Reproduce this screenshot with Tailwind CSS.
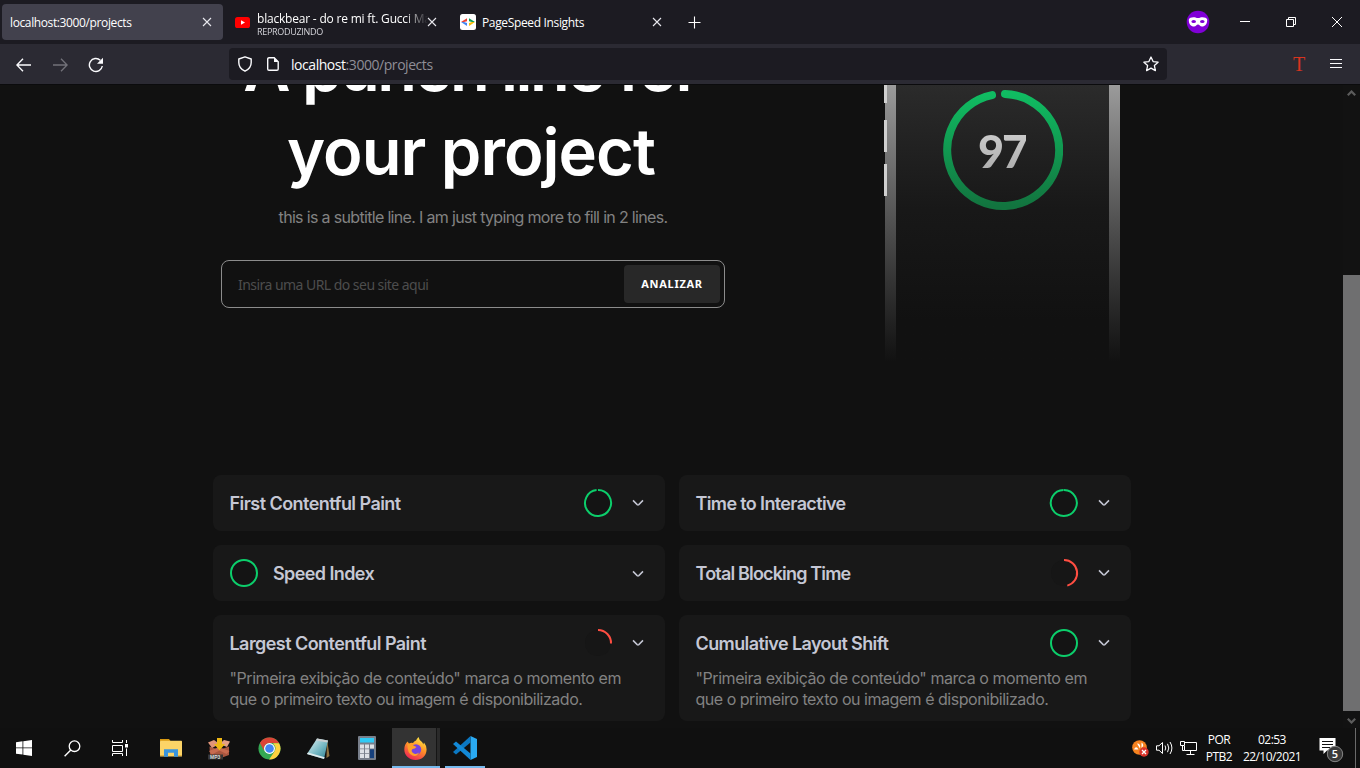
<!DOCTYPE html>
<html lang="pt-BR">
<head>
<meta charset="utf-8">
<title>localhost:3000/projects</title>
<script src="https://cdn.jsdelivr.net/npm/@tailwindcss/browser@4"></script>
</head>
<body class="w-[1360px] h-[768px] overflow-hidden bg-[#111111] flex flex-col font-['Open_Sans',sans-serif] text-white">
<svg class="hidden">
  <symbol id="close" viewBox="0 0 10 10"><path d="M1 1l8 8M9 1l-8 8" stroke="#e8e8ee" stroke-width="1.1" fill="none"/></symbol>
  <symbol id="chev" viewBox="0 0 12 8"><path d="M1 1.4l4.2 4.2q.8.6 1.6 0L11 1.4" stroke="#c5c7d4" stroke-width="1.5" fill="none"/></symbol>
</svg>

<!-- tab strip -->
<header class="h-[44px] shrink-0 bg-[#1c1b22] flex items-center pl-[2px]">
  <div class="w-[221px] h-[36px] bg-[#42414d] rounded-[4px] flex items-center justify-between pl-[8px] pr-[11px]">
    <span class="mt-[2px] text-[12px] leading-[16px] tracking-[-0.38px] whitespace-nowrap">localhost:3000/projects</span>
    <svg class="size-[10px]"><use href="#close"/></svg>
  </div>
  <div class="w-[225px] h-[36px] flex items-center pl-[12px] pr-[10px]">
    <svg class="w-[15px] h-[11px] shrink-0" viewBox="0 0 15 11"><rect width="15" height="11" rx="2.6" fill="#f00"/><path d="M6 3.2v4.6l4-2.3z" fill="#fff"/></svg>
    <div class="mt-[3px] ml-[7px] w-[171px] flex flex-col whitespace-nowrap overflow-hidden [mask-image:linear-gradient(to_right,#000_148px,transparent_171px)]">
      <span class="text-[12px] leading-[17px] tracking-[-0.2px]">blackbear - do re mi ft. Gucci Ma</span>
      <span class="text-[9px] leading-[12px] tracking-[-0.3px] -mt-px text-[#d4d4da]">REPRODUZINDO</span>
    </div>
    <svg class="size-[10px] shrink-0 -ml-[1px]"><use href="#close"/></svg>
  </div>
  <div class="w-[225px] h-[36px] flex items-center pl-[12px] pr-[11px]">
    <svg class="size-[16px] shrink-0" viewBox="0 0 16 16"><rect width="16" height="16" rx="2.5" fill="#fff"/><path d="M7 4.2v3L4 8 1 8z" fill="#ea4335"/><path d="M1 8h3l3 1v3z" fill="#4285f4"/><path d="M9 4.2v3L12 8h3z" fill="#0f9d58"/><path d="M15 8h-3L9 9v3z" fill="#fbbc04"/></svg>
    <span class="mt-[2px] ml-[6px] flex-1 text-[12px] leading-[16px] tracking-[-0.35px] whitespace-nowrap">PageSpeed Insights</span>
    <svg class="size-[10px]"><use href="#close"/></svg>
  </div>
  <svg class="ml-[15px] size-[13px]" viewBox="0 0 13 13"><path d="M6.5 .5v12M.5 6.5h12" stroke="#fff" stroke-width="1.1"/></svg>
  <svg class="ml-auto size-[24px]" viewBox="0 0 24 24"><circle cx="12" cy="12" r="11.3" fill="#8000d7"/><path d="M2.8 9.5C3.3 7 8 6.800 9.600 7.500Q12 8.600 14.400 7.500C16 6.800 20.700 7 21.200 9.500C21.400 14 19 16.600 16 16.600C14 16.600 13.500 14.500 12 14.500S10 16.600 8 16.600C5 16.600 2.600 14 2.800 9.500z" fill="#fff"/><ellipse cx="7.700" cy="11.600" rx="2.300" ry="1.500" fill="#8000d7"/><ellipse cx="16.300" cy="11.600" rx="2.300" ry="1.500" fill="#8000d7"/></svg>
  <svg class="ml-[30px] w-[10px] h-[10px]" viewBox="0 0 10 10"><path d="M0 4.500h10" stroke="#fff"/></svg>
  <svg class="ml-[36px] size-[10px]" viewBox="0 0 10 10"><path d="M.5 2.500h7v7h-7zM2.500 2.500v-2h7v7h-2" stroke="#fff" fill="none"/></svg>
  <svg class="ml-[36px] mr-[18px] size-[10px]" viewBox="0 0 10 10"><path d="M0 0l10 10M10 0L0 10" stroke="#fff" fill="none"/></svg>
</header>

<!-- toolbar -->
<nav class="h-[40px] shrink-0 bg-[#2b2a33] flex items-center pl-[16px] pr-[18px]">
  <svg class="mt-px w-[15px] h-[14px]" viewBox="0 0 15 14"><path d="M7 .8L.9 7 7 13.200M1 7h14" stroke="#fbfbfe" stroke-width="1.400" fill="none"/></svg>
  <svg class="mt-px ml-[22px] w-[15px] h-[14px]" viewBox="0 0 15 14"><path d="M8 .8L14.100 7 8 13.200M14 7H0" stroke="#73727a" stroke-width="1.300" fill="none"/></svg>
  <svg class="mt-px ml-[20px] size-[16px]" viewBox="0 0 16 16"><path d="M14.300 9A6.500 6.500 0 1 1 12.300 3.200" stroke="#fbfbfe" stroke-width="1.400" fill="none"/><path d="M15 .8v6H9z" fill="#fbfbfe"/></svg>
  <div class="ml-[125px] w-[938px] h-[32px] rounded-[4px] bg-[#1c1b22] flex items-center pl-[9px] pr-[8px]">
    <svg class="w-[14px] h-[16px]" viewBox="0 0 14 16"><path d="M7 .8L13.200 3v3.500c0 4-2.400 7-6.200 8.700C3.200 13.500.8 10.500.8 6.500V3z" stroke="#fbfbfe" stroke-width="1.400" fill="none" stroke-linejoin="round"/></svg>
    <svg class="ml-[15px] w-[12px] h-[14px]" viewBox="0 0 12 14"><path d="M2 .7h5.200l4 4V12a1.300 1.300 0 0 1-1.300 1.300H2A1.300 1.300 0 0 1 .7 12V2A1.300 1.300 0 0 1 2 .7z" stroke="#fbfbfe" stroke-width="1.400" fill="none"/><path d="M7 .5v4.500h4.500z" fill="#fbfbfe"/></svg>
    <span class="mt-px ml-[12px] flex-1 text-[14px] leading-[20px] tracking-[-0.45px] text-[#fbfbfe] whitespace-nowrap">localhost<span class="text-[#8f8e96]">:3000/projects</span></span>
    <svg class="size-[16px]" viewBox="0 0 16 16"><path d="M8 1l2.100 4.600 5 .6-3.700 3.400 1 5L8 12.100 3.600 14.600l1-5L.9 6.200l5-.6z" stroke="#fbfbfe" stroke-width="1.300" fill="none" stroke-linejoin="round"/></svg>
  </div>
  <span class="ml-auto mr-px w-[14px] text-center font-['Liberation_Serif',serif] text-[20px] leading-[20px] text-[#d8341f]">T</span>
  <svg class="ml-[23px] -mt-px w-[12px] h-[11px]" viewBox="0 0 12 11"><path d="M0 1.500h12M0 5.500h12M0 9.500h12" stroke="#fbfbfe" stroke-width="1.200"/></svg>
</nav>

<!-- page -->
<div class="h-[644px] shrink-0 flex border-t border-[#0b0b0d] overflow-hidden">
  <main class="w-[1343px] h-[643px] overflow-hidden font-['Inter',sans-serif] bg-[#111111]">
    <section class="flex h-[390px] pl-[221px]">
      <div class="w-[504px] -mt-[59px] flex flex-col items-center">
        <h1 class="-ml-[4px] text-[65px] leading-[84px] font-semibold text-center whitespace-nowrap"><span class="tracking-[-2.5px]">A punch line for</span><br><span class="tracking-[-0.95px]">your project</span></h1>
        <p class="mt-[11px] text-[16px] leading-[24px] tracking-[-0.67px] text-[#828282] whitespace-nowrap">this is a subtitle line. I am just typing more to fill in 2 lines.</p>
        <div class="mt-[31px] w-[504px] h-[48px] shrink-0 rounded-[8px] border border-[#8c8c8c] flex items-center justify-between pl-[16px] pr-[4px]">
          <span class="font-['Noto_Sans',sans-serif] text-[14px] tracking-[-0.54px] text-[#4d4d4d]">Insira uma URL do seu site aqui</span>
          <button class="w-[96px] h-[38px] rounded-[4px] bg-[#282828] font-['Noto_Sans',sans-serif] font-bold text-[11px] tracking-[0.7px]">ANALIZAR</button>
        </div>
      </div>
      <div class="relative ml-[160px] w-[235px] h-[277px] flex">
        <div class="w-[11px] bg-linear-to-b from-[#9b9b9b] to-[#111111]"></div>
        <div class="flex-1 flex justify-center bg-linear-to-b from-[#2b2b2b] via-[#181818] via-45% to-[#111111] to-85%">
          <div class="relative mt-[5px] size-[120px] flex items-center justify-center">
            <svg class="absolute inset-0 size-[120px]" viewBox="0 0 120 120"><defs><linearGradient id="g" x1="0" y1="0" x2="0" y2="1"><stop stop-color="#10bc62"/><stop offset="1" stop-color="#12743f"/></linearGradient></defs><path d="M62 4A56 56 0 1 1 49 5.100" stroke="url(#g)" stroke-width="8" stroke-linecap="round" fill="none"/></svg>
            <span class="mt-px -ml-px font-['Lato',sans-serif] font-black text-[45px] leading-[56px] tracking-[-2px] bg-linear-to-b from-[#d2d2d2] to-[#a8a8a8] bg-clip-text text-transparent">97</span>
          </div>
        </div>
        <div class="w-[11px] bg-linear-to-b from-[#9b9b9b] to-[#111111]"></div>
        <div class="absolute -left-px top-0 w-[3px] h-[18px] bg-[#d0d0d0]"></div>
        <div class="absolute -left-px top-[35px] w-[3px] h-[32px] bg-[#d0d0d0]"></div>
        <div class="absolute -left-px top-[79px] w-[3px] h-[32px] bg-[#d0d0d0]"></div>
      </div>
    </section>

    <section class="grid grid-cols-2 gap-[14px] w-[918px] ml-[213px] text-[18px] font-semibold text-[#c5c7d4]">
      <article class="h-[56px] pl-[16.5px] pr-[17px] rounded-[8px] bg-[#181818] flex items-center">
        <h2 class="flex-1 tracking-[-0.55px]">First Contentful Paint</h2>
        <svg class="size-[30px]" viewBox="0 0 30 30"><path d="M15 2A13 13 0 1 1 13.600 2.080" stroke="#0cce6b" stroke-width="2" fill="#141414"/></svg>
        <svg class="ml-[19px] mr-[4px] w-[12px] h-[8px]"><use href="#chev"/></svg>
      </article>
      <article class="h-[56px] pl-[16.5px] pr-[17px] rounded-[8px] bg-[#181818] flex items-center">
        <h2 class="flex-1 tracking-[-0.64px]">Time to Interactive</h2>
        <svg class="size-[30px]" viewBox="0 0 30 30"><path d="M15 2A13 13 0 1 1 14.600 2" stroke="#0cce6b" stroke-width="2" fill="#141414"/></svg>
        <svg class="ml-[19px] mr-[4px] w-[12px] h-[8px]"><use href="#chev"/></svg>
      </article>
      <article class="h-[56px] px-[17px] rounded-[8px] bg-[#181818] flex items-center">
        <svg class="-ml-px size-[30px]" viewBox="0 0 30 30"><circle cx="15" cy="15" r="13" stroke="#0cce6b" stroke-width="2" fill="#141414"/></svg>
        <h2 class="ml-[14px] flex-1 tracking-[-0.6px]">Speed Index</h2>
        <svg class="mr-[4px] mt-[2px] w-[12px] h-[8px]"><use href="#chev"/></svg>
      </article>
      <article class="h-[56px] pl-[16.5px] pr-[17px] rounded-[8px] bg-[#181818] flex items-center">
        <h2 class="flex-1 tracking-[-0.83px]">Total Blocking Time</h2>
        <svg class="size-[30px]" viewBox="0 0 30 30"><circle cx="15" cy="15" r="13" fill="#161616"/><path d="M15 2A13 13 0 0 1 18.300 27.600" stroke="#ff4e42" stroke-width="2" fill="none"/></svg>
        <svg class="ml-[19px] mr-[4px] w-[12px] h-[8px]"><use href="#chev"/></svg>
      </article>
      <article class="h-[106px] pl-[16.5px] pr-[17px] rounded-[8px] bg-[#181818] flex flex-col">
        <div class="h-[56px] shrink-0 flex items-center">
          <h2 class="flex-1 tracking-[-0.56px]">Largest Contentful Paint</h2>
          <svg class="size-[30px]" viewBox="0 0 30 30"><circle cx="15" cy="15" r="13" fill="#161616"/><path d="M15 2A13 13 0 0 1 28 15.500" stroke="#ff4e42" stroke-width="2" fill="none"/></svg>
          <svg class="ml-[19px] mr-[4px] w-[12px] h-[8px]"><use href="#chev"/></svg>
        </div>
        <p class="-mt-[3px] text-[16px] leading-[21px] font-normal tracking-[-0.44px] text-[#828282] whitespace-nowrap">"Primeira exibição de conteúdo" marca o momento em<br><span class="tracking-[-0.48px]">que o primeiro texto ou imagem é disponibilizado.</span></p>
      </article>
      <article class="h-[106px] pl-[16.5px] pr-[17px] rounded-[8px] bg-[#181818] flex flex-col">
        <div class="h-[56px] shrink-0 flex items-center">
          <h2 class="flex-1 tracking-[-0.6px]">Cumulative Layout Shift</h2>
          <svg class="size-[30px]" viewBox="0 0 30 30"><circle cx="15" cy="15" r="13" stroke="#0cce6b" stroke-width="2" fill="#141414"/></svg>
          <svg class="ml-[19px] mr-[4px] w-[12px] h-[8px]"><use href="#chev"/></svg>
        </div>
        <p class="-mt-[3px] text-[16px] leading-[21px] font-normal tracking-[-0.44px] text-[#828282] whitespace-nowrap">"Primeira exibição de conteúdo" marca o momento em<br><span class="tracking-[-0.48px]">que o primeiro texto ou imagem é disponibilizado.</span></p>
      </article>
    </section>
  </main>
  <aside class="w-[17px] flex flex-col items-center justify-between bg-[#121212] pt-[5px] pb-[4px]">
    <svg class="w-[9px] h-[6px]" viewBox="0 0 9 6"><path d="M.8 5.200L4.500 1.500l3.700 3.700" stroke="#5c5c5c" stroke-width="2.200" fill="none"/></svg>
    <div class="w-[17px] h-[436px] mt-auto mb-[7px] bg-[#6f6f70]"></div>
    <svg class="w-[9px] h-[6px]" viewBox="0 0 9 6"><path d="M.8 .8l3.700 3.700L8.200.8" stroke="#5c5c5c" stroke-width="2.200" fill="none"/></svg>
  </aside>
</div>

<!-- taskbar -->
<footer class="h-[40px] shrink-0 bg-[#101010] flex items-center">
  <svg class="ml-[16px] size-[16px]" viewBox="0 0 16 16"><path d="M0 2.200L6.500 1.300v6.200H0zM7.300 1.200L16 0v7.500H7.300zM0 8.300h6.500v6.200L0 13.700zM7.300 8.300H16V16l-8.700-1.300z" fill="#fff"/></svg>
  <svg class="ml-[32px] size-[17px]" viewBox="0 0 17 17"><circle cx="10.500" cy="6.200" r="5.300" stroke="#fff" stroke-width="1.300" fill="none"/><path d="M6.800 10L.6 16.300" stroke="#fff" stroke-width="1.400"/></svg>
  <svg class="ml-[31px] w-[16px] h-[16px]" viewBox="0 0 16 16"><path d="M.5 0v2.500h10V0M.5 5.500h10v6H.5zM.5 16v-2.500h10V16M14.500 0v3M14.500 8.500V16" stroke="#fff" fill="none"/><rect x="13" y="4" width="3" height="3.500" fill="#fff"/></svg>
  <svg class="ml-[32px] w-[22px] h-[18px]" viewBox="0 0 22 18"><path d="M0 0h9l1.500 2H0z" fill="#d99a12"/><rect y="1.800" width="22" height="15.700" rx=".6" fill="#fcd467"/><path d="M4 17.800v-7.500h14v7.500h-4v-4H8v4z" fill="#3a94dc"/><path d="M0 17h4v-1H0zM18 17h4v-1h-4z" fill="#e3b246"/></svg>
  <svg class="ml-[26px] w-[23px] h-[23px]" viewBox="0 0 23 23"><path d="M1.500 9.500L11 13l10-3.500V18l-9.500 3.500L2 18z" fill="#a9563f"/><path d="M0 5.500L6 3l5.500 4L4 11z" fill="#e09478"/><path d="M22 4.500L16 3l-4.500 4 7.500 3z" fill="#e5a084"/><path d="M1 14l9-3.500 1.500 3L4 17.500zM21.500 14l-8-3-2 2.500 7 3.500z" fill="#c76b50"/><path d="M9 1h5v6h3l-5.500 6.500L6 7h3z" fill="#edb713"/><rect y="17.500" width="15" height="5" fill="#363636"/><text x="2" y="22" font-size="5" font-weight="bold" font-family="Liberation Sans" fill="#ddd">MP3</text></svg>
  <svg class="ml-[27px] size-[23px]" viewBox="0 0 24 24"><circle cx="12" cy="12" r="11.500" fill="#34a853"/><path d="M2 6.200A11.500 11.500 0 0 1 22 6.300H12A6 6 0 0 0 6.800 15z" fill="#db4437"/><path d="M22 6.500A11.500 11.500 0 0 1 11.600 23.500L17.200 15A6 6 0 0 0 16 7.200V6.500z" fill="#fdd23f"/><circle cx="12" cy="12" r="5.700" fill="#fff"/><circle cx="12" cy="12" r="4.500" fill="#4285f4"/></svg>
  <svg class="ml-[26px] w-[23px] h-[23px]" viewBox="0 0 23 23"><defs><linearGradient id="n" x1="0" y1="0" x2="1" y2="1"><stop stop-color="#e6f5f7"/><stop offset=".6" stop-color="#6fb4c0"/><stop offset="1" stop-color="#2f7d8e"/></linearGradient></defs><path d="M20 2l2.500 17-3 2z" fill="#8d7140"/><path d="M10 1.500L21 3.500 17 22 0 17z" fill="url(#n)"/><path d="M10 1.500L21 3.500l-.6 2L9 3.500z" fill="#c9ced1"/><path d="M0 17l17 5 .7-1.700L1 15.500z" fill="#e0eaec"/></svg>
  <svg class="ml-[28px] w-[18px] h-[24px]" viewBox="0 0 18 24"><rect width="18" height="24" rx="1" fill="#787f8b"/><rect x="2" y="2" width="14" height="4.500" fill="#2fcaf5"/><path d="M2 8.500h4v4H2zM7 8.500h4v4H7zM12 8.500h4v4h-4zM2 13.300h4v4H2zM7 13.300h4v4H7zM2 18.100h4v4H2zM7 18.100h4v4H7z" fill="#dde1e6"/><rect x="12" y="13.300" width="4" height="8.800" fill="#16407c"/></svg>
  <div class="ml-[16px] w-[48px] h-[40px] bg-[#333] border-b-2 border-[#76b9ed] flex items-center justify-between">
    <svg class="ml-[12px] size-[23px] mt-[2px]" viewBox="0 0 23 23"><defs><linearGradient id="f" x1=".8" y1="0" x2=".3" y2="1"><stop stop-color="#fff04a"/><stop offset=".45" stop-color="#ff9626"/><stop offset="1" stop-color="#ee2155"/></linearGradient></defs><path d="M3.500 4.500L5 6.500Q7 5.500 9 6Q10 4 12 3.500Q12.500 2 14.500 0Q15 3 18 5Q19 6 19.200 7.500L20 5.500Q22.800 9 22.600 12.500C22.500 19 17.500 23 11.500 23S.3 18.500.3 12.500Q.3 7.500 3.500 4.500z" fill="url(#f)"/><circle cx="12" cy="12.500" r="5.200" fill="#7543e0"/><path d="M3.500 7Q7 6 9.500 8.500L12.500 10Q11 12 8.500 12Q6.500 14 9 16Q12 18 15 15.500Q13 20 8.500 18.500Q3 16.500 3.500 7z" fill="#ffa02a"/></svg>
    <div class="w-[4px] h-[38px] bg-[#2a2a2a] border-l border-[#151515]"></div>
  </div>
  <div class="ml-[5px] w-[40px] h-[40px] border-b-2 border-[#76b9ed] flex items-center justify-center">
    <svg class="size-[24px] mt-[2px]" viewBox="0 0 24 24"><path d="M17.500 0L24 3v18l-6.500 3z" fill="#2aaaf2"/><path d="M17.500 0v6.500L3 18.500 0 16z" fill="#0b77c1"/><path d="M17.500 24v-6.500L3 5.500 0 8z" fill="#1389d6"/></svg>
  </div>
  <svg class="ml-auto w-[17px] h-[17px]" viewBox="0 0 17 17"><circle cx="7.500" cy="7.500" r="7.300" fill="#f5821f"/><path d="M2 9.500Q4 5 6.500 9.500zM5 3.500Q9 3.500 8 8.500zM9.500 2.500Q13 5 9.500 8z" fill="#fff"/><circle cx="12" cy="12" r="4.700" fill="#d9342b"/><path d="M10 10l4 4M14 10l-4 4" stroke="#fff" stroke-width="1.300"/></svg>
  <svg class="ml-[7px] w-[17px] h-[14px]" viewBox="0 0 17 14"><path d="M.5 4.800h2.500L6.500 1.500v11L3 9.200H.5zM9 4.500q1.500 2.500 0 5M11.500 2.800q2.600 4.200 0 8.400M14 1q3.800 6 0 12" stroke="#fff" fill="none"/></svg>
  <svg class="ml-[7px] w-[17px] h-[14px]" viewBox="0 0 17 14"><path d="M5 1.500h11.500v8H4.500V5M10.500 9.500v3.500M6.500 13.500h8M.5.500h4v4h-4zM2.500 4.500v5h2" stroke="#fff" fill="none"/></svg>
  <div class="ml-[8px] w-[28px] flex flex-col items-center text-[12px] leading-[17px] tracking-[-0.5px] whitespace-nowrap"><span>POR</span><span>PTB2</span></div>
  <div class="ml-[9px] w-[60px] flex flex-col items-center text-[12px] leading-[17px] tracking-[-0.55px] whitespace-nowrap"><span>02:53</span><span>22/10/2021</span></div>
  <svg class="ml-[17px] mt-[4px] w-[25px] h-[26px]" viewBox="0 0 25 26"><path d="M.5 1h16v12.500H8L4.500 17v-3.500h-4z" fill="#fff"/><path d="M3 4.500h11M3 7.500h11M3 10.500h8" stroke="#111"/><circle cx="16" cy="17" r="7.700" fill="#3a3a3a" stroke="#858585"/><text x="16" y="21" text-anchor="middle" font-size="11" font-weight="600" font-family="Open Sans" fill="#fff">5</text></svg>
  <div class="ml-[11px] mr-[4px] w-px h-[40px] bg-[#6a6a6a]"></div>
</footer>
</body>
</html>
